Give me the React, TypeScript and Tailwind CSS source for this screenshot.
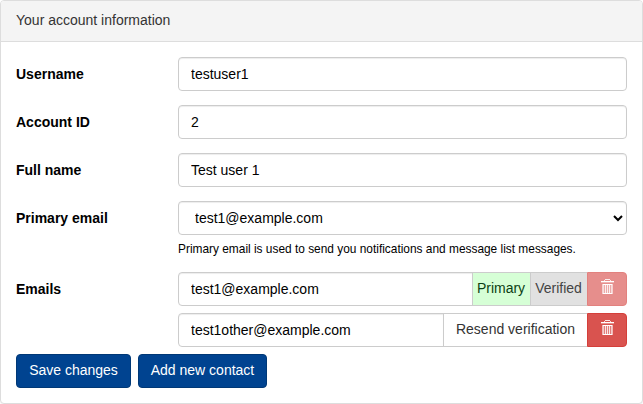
import React from "react";

const control =
  "h-[34px] w-full rounded-[4px] border border-[#cccccc] bg-white px-3 text-[14px] leading-5 text-black shadow-[inset_0_1px_1px_rgba(0,0,0,0.075)] outline-none";

function TrashIcon() {
  return (
    <svg width="14" height="16" viewBox="-1 0 14 16" className="block" fill="#fff" shapeRendering="crispEdges">
      <path d="M4 0H9V1H4Z" fillOpacity=".85" />
      <path d="M3 1H4V2H3ZM9 1H10V2H9Z" fillOpacity=".75" />
      <path d="M0 2H13V3H0Z" />
      <path d="M0 3H13V4H0Z" fillOpacity=".35" />
      <path d="M2 5H11V6H2Z" />
      <path d="M1 5H2V15H1ZM11 5H12V15H11Z" fillOpacity=".6" />
      <path d="M2 6H3V14H2ZM10 6H11V14H10Z" fillOpacity=".7" />
      <path d="M4 6H5V14H4ZM6 6H7V14H6ZM8 6H9V14H8Z" fillOpacity=".85" />
      <path d="M3 6H4V14H3ZM5 6H6V14H5ZM7 6H8V14H7ZM9 6H10V14H9Z" fillOpacity=".25" />
      <path d="M2 14H11V15H2Z" />
    </svg>
  );
}

function Row({ label, children }: { label: string; children: React.ReactNode }) {
  return (
    <div className="flex">
      <div className="w-[162px] shrink-0 pt-[7px] text-[14px] leading-5 font-bold">{label}</div>
      <div className="min-w-0 flex-1">{children}</div>
    </div>
  );
}

function DeleteButton({ disabled = false }: { disabled?: boolean }) {
  return (
    <button
      disabled={disabled}
      aria-label="Delete email"
      className={
        "flex h-[34px] w-10 shrink-0 justify-center rounded-r-[4px] border border-[#d43f3a] bg-[#d9534f] pt-[6px] " +
        (disabled ? "opacity-65" : "")
      }
    >
      <TrashIcon />
    </button>
  );
}

export default function App() {
  return (
    <div className="h-[404px] w-[643px] overflow-hidden rounded-[4px] border border-[#dddddd] bg-white font-['Liberation_Sans',Arial,sans-serif] text-[14px] leading-5 text-black shadow-[0_1px_1px_rgba(0,0,0,0.05)]">
      <div className="h-[41px] border-b border-[#dddddd] bg-[#f4f4f4] px-[15px] pt-[9px] text-[#333333]">
        Your account information
      </div>
      <div className="flex flex-col p-[15px]">
        <div className="flex flex-col gap-[14px]">
          <Row label="Username">
            <input className={control} defaultValue="testuser1" />
          </Row>
          <Row label="Account ID">
            <input className={control} defaultValue="2" />
          </Row>
          <Row label="Full name">
            <input className={control} defaultValue="Test user 1" />
          </Row>
          <Row label="Primary email">
            <select className={control + " pr-0"}>
              <option>test1@example.com</option>
            </select>
            <div className="mt-[5px] h-[18px] text-[11.9px] leading-[18px]">
              Primary email is used to send you notifications and message list messages.
            </div>
          </Row>
          <Row label="Emails">
            <div className="flex flex-col gap-[7px]">
              <div className="flex">
                <input className={control + " min-w-0 flex-1 rounded-r-none"} defaultValue="test1@example.com" />
                <span className="-ml-px h-[34px] w-[59px] shrink-0 border border-[#cccccc] bg-[#d6ffd6] pt-[5px] pr-px text-center text-[#0c3f14]">
                  Primary
                </span>
                <span className="-ml-px h-[34px] w-[57px] shrink-0 border border-r-0 border-[#cccccc] bg-[#e1e1e1] pt-[5px] pr-px text-center text-[#444444]">
                  Verified
                </span>
                <DeleteButton disabled />
              </div>
              <div className="flex">
                <input className={control + " min-w-0 flex-1 rounded-r-none"} defaultValue="test1other@example.com" />
                <button className="-ml-px h-[34px] w-[144px] shrink-0 border border-r-0 border-[#cccccc] bg-white pb-[2px] text-[#333333]">
                  Resend verification
                </button>
                <DeleteButton />
              </div>
            </div>
          </Row>
        </div>
        <div className="mt-[7px] flex gap-[7px]">
          <button className="h-[34px] w-[115px] rounded-[4px] border border-[#003876] bg-[#004390] pb-[2px] text-white">
            Save changes
          </button>
          <button className="h-[34px] w-[129px] rounded-[4px] border border-[#003876] bg-[#004390] pb-[2px] text-white">
            Add new contact
          </button>
        </div>
      </div>
    </div>
  );
}
